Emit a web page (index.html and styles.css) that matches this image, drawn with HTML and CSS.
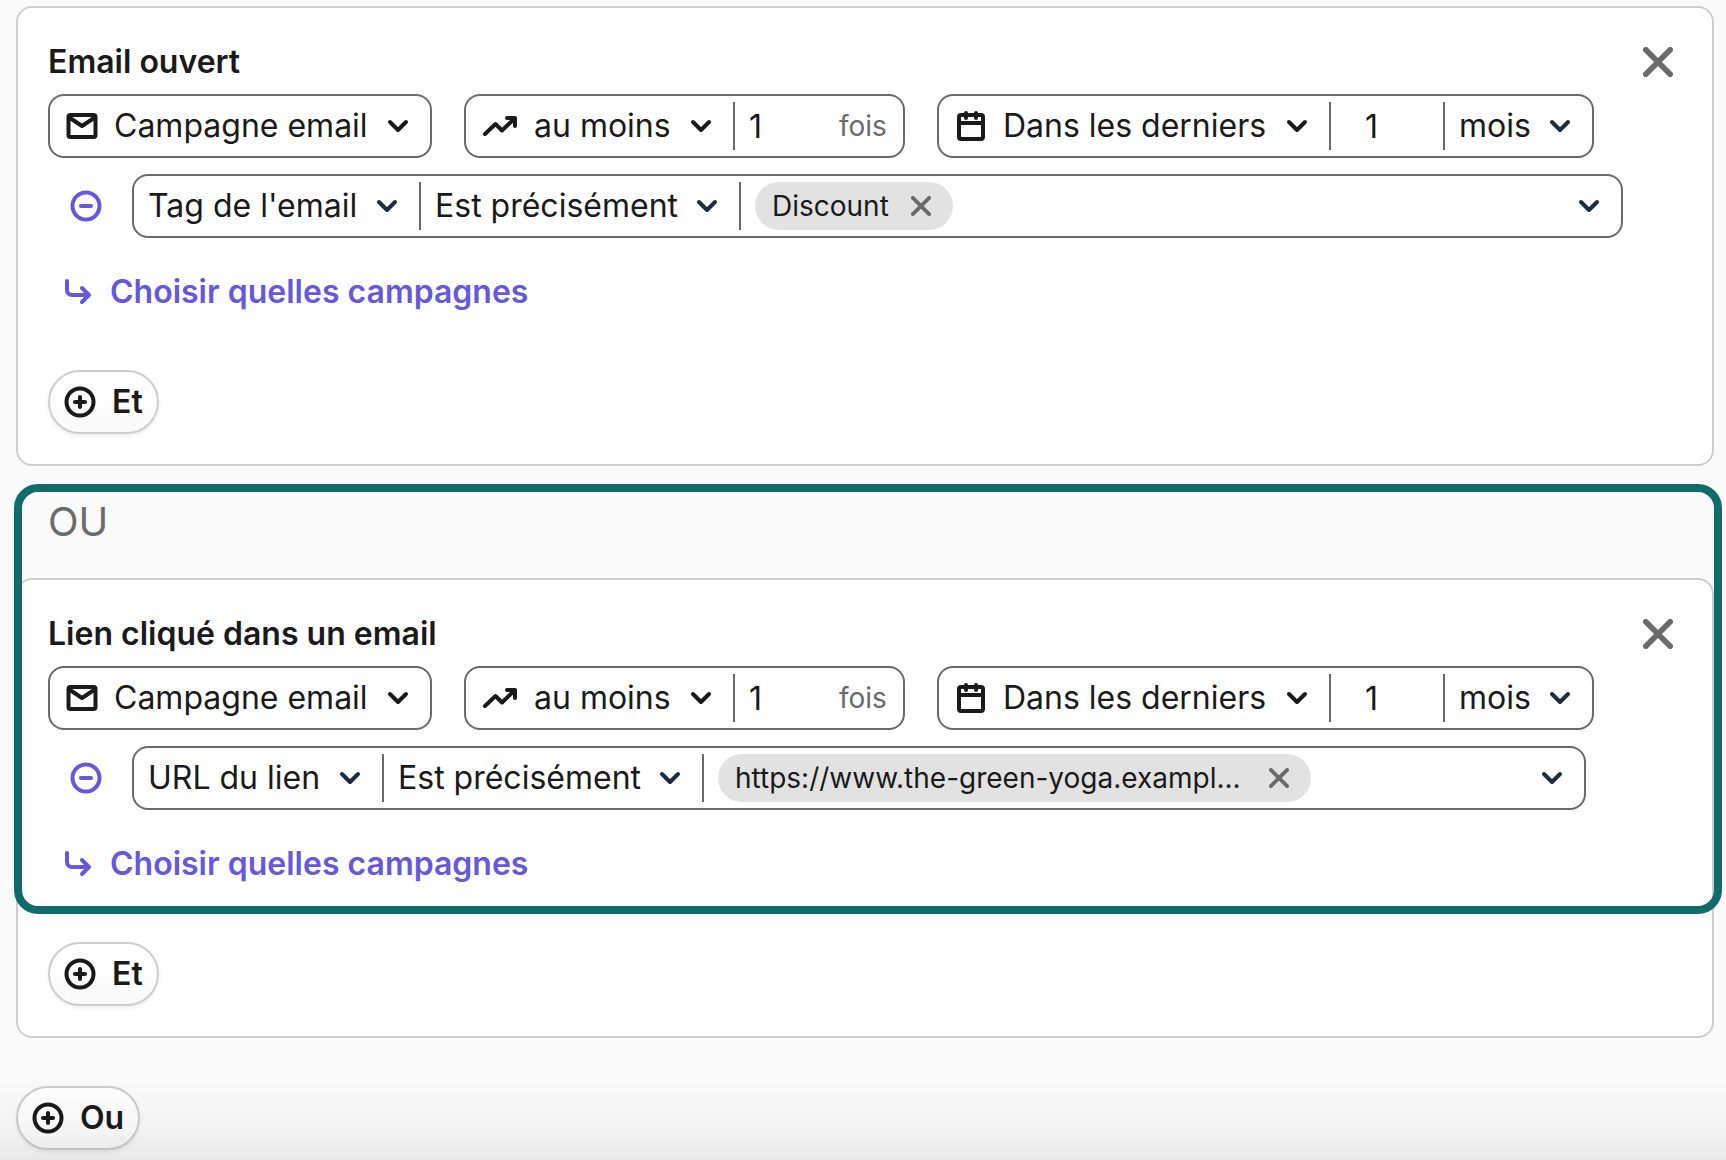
FILE: index.html
```html
<!DOCTYPE html>
<html lang="fr">
<head>
    <meta charset="UTF-8">
    <meta name="viewport" content="width=device-width, initial-scale=1.0">
    <title>Segment</title>
    <link rel="stylesheet" href="styles.css">
</head>
<body>

    <!-- Shared icons -->
    <svg class="sprite" aria-hidden="true">
        <symbol id="i-chevron" viewBox="0 0 24 24"><path d="M4 8l8 8 8-8"/></symbol>
        <symbol id="i-close" viewBox="0 0 32 32"><path d="M3 3l26 26M29 3L3 29"/></symbol>
        <symbol id="i-mail" viewBox="0 0 32 32"><rect x="2.5" y="5" width="27" height="22" rx="2"/><path d="M4 8l12 8 12-8"/></symbol>
        <symbol id="i-trend" viewBox="0 0 36 32"><path d="M3 24L13.5 14l6.5 6.500L32.500 8.500M25 8h8v8"/></symbol>
        <symbol id="i-calendar" viewBox="0 0 32 32"><rect x="4" y="5" width="24" height="24" rx="2"/><path d="M4 13h24M11 3v5M21 3v5"/></symbol>
        <symbol id="i-minus" viewBox="0 0 32 32"><circle cx="16" cy="16" r="13.5"/><path d="M11 16h10"/></symbol>
        <symbol id="i-plus" viewBox="0 0 32 32"><circle cx="16" cy="16" r="13.5"/><path d="M11 16h10M16 11v10"/></symbol>
        <symbol id="i-arrow" viewBox="0 0 28 28"><path d="M3 3v9a5 5 0 0 0 5 5h17M18 10l7 7-7 7"/></symbol>
    </svg>

    <main>
        <section class="card">
            <header class="card-header">
                <h2>Email ouvert</h2>
                <button class="close" aria-label="Supprimer la condition"><svg><use href="#i-close"/></svg></button>
            </header>

            <div class="row">
                <div class="field">
                    <label class="cell with-icon">
                        <svg class="icon"><use href="#i-mail"/></svg>
                        <select aria-label="Source"><option>Campagne email</option></select>
                        <svg class="chevron"><use href="#i-chevron"/></svg>
                    </label>
                </div>
                <div class="field">
                    <label class="cell with-icon">
                        <svg class="icon wide"><use href="#i-trend"/></svg>
                        <select aria-label="Fréquence"><option>au moins</option></select>
                        <svg class="chevron"><use href="#i-chevron"/></svg>
                    </label>
                    <label class="cell count">
                        <input type="number" value="1">
                        <span class="unit">fois</span>
                    </label>
                </div>
                <div class="field">
                    <label class="cell with-icon">
                        <svg class="icon"><use href="#i-calendar"/></svg>
                        <select aria-label="Période"><option>Dans les derniers</option></select>
                        <svg class="chevron"><use href="#i-chevron"/></svg>
                    </label>
                    <label class="cell duration">
                        <input type="number" value="1" aria-label="Durée">
                    </label>
                    <label class="cell plain">
                        <select aria-label="Unité"><option>mois</option></select>
                        <svg class="chevron navy"><use href="#i-chevron"/></svg>
                    </label>
                </div>
            </div>

            <div class="row filter">
                <button class="remove" aria-label="Retirer le filtre"><svg class="icon"><use href="#i-minus"/></svg></button>
                <div class="field">
                    <label class="cell plain">
                        <select aria-label="Filtre"><option>Tag de l'email</option></select>
                        <svg class="chevron navy"><use href="#i-chevron"/></svg>
                    </label>
                    <label class="cell plain">
                        <select aria-label="Opérateur"><option>Est précisément</option></select>
                        <svg class="chevron navy"><use href="#i-chevron"/></svg>
                    </label>
                    <div class="cell values">
                        <span class="chip">
                            <span class="chip-text">Discount</span>
                            <button aria-label="Retirer Discount"><svg><use href="#i-close"/></svg></button>
                        </span>
                        <button class="open" aria-label="Ouvrir la liste"><svg class="chevron navy"><use href="#i-chevron"/></svg></button>
                    </div>
                </div>
            </div>

            <a href="#" class="choose"><svg><use href="#i-arrow"/></svg>Choisir quelles campagnes</a>
            <button class="add"><svg class="icon"><use href="#i-plus"/></svg>Et</button>
        </section>

        <div class="group">
            <p class="operator">OU</p>

            <section class="card">
                <header class="card-header">
                    <h2>Lien cliqué dans un email</h2>
                    <button class="close" aria-label="Supprimer la condition"><svg><use href="#i-close"/></svg></button>
                </header>

                <div class="row">
                    <div class="field">
                        <label class="cell with-icon">
                            <svg class="icon"><use href="#i-mail"/></svg>
                            <select aria-label="Source"><option>Campagne email</option></select>
                            <svg class="chevron"><use href="#i-chevron"/></svg>
                        </label>
                    </div>
                    <div class="field">
                        <label class="cell with-icon">
                            <svg class="icon wide"><use href="#i-trend"/></svg>
                            <select aria-label="Fréquence"><option>au moins</option></select>
                            <svg class="chevron"><use href="#i-chevron"/></svg>
                        </label>
                        <label class="cell count">
                            <input type="number" value="1">
                            <span class="unit">fois</span>
                        </label>
                    </div>
                    <div class="field">
                        <label class="cell with-icon">
                            <svg class="icon"><use href="#i-calendar"/></svg>
                            <select aria-label="Période"><option>Dans les derniers</option></select>
                            <svg class="chevron"><use href="#i-chevron"/></svg>
                        </label>
                        <label class="cell duration">
                            <input type="number" value="1" aria-label="Durée">
                        </label>
                        <label class="cell plain">
                            <select aria-label="Unité"><option>mois</option></select>
                            <svg class="chevron navy"><use href="#i-chevron"/></svg>
                        </label>
                    </div>
                </div>

                <div class="row filter">
                    <button class="remove" aria-label="Retirer le filtre"><svg class="icon"><use href="#i-minus"/></svg></button>
                    <div class="field">
                        <label class="cell plain">
                            <select aria-label="Filtre"><option>URL du lien</option></select>
                            <svg class="chevron navy"><use href="#i-chevron"/></svg>
                        </label>
                        <label class="cell plain">
                            <select aria-label="Opérateur"><option>Est précisément</option></select>
                            <svg class="chevron navy"><use href="#i-chevron"/></svg>
                        </label>
                        <div class="cell values">
                            <span class="chip">
                                <span class="chip-text url">https://www.the-green-yoga.exampl...</span>
                                <button aria-label="Retirer le lien"><svg><use href="#i-close"/></svg></button>
                            </span>
                            <button class="open" aria-label="Ouvrir la liste"><svg class="chevron navy"><use href="#i-chevron"/></svg></button>
                        </div>
                    </div>
                </div>

                <a href="#" class="choose"><svg><use href="#i-arrow"/></svg>Choisir quelles campagnes</a>
                <button class="add"><svg class="icon"><use href="#i-plus"/></svg>Et</button>
            </section>

            <div class="highlight"></div>
        </div>

        <button class="add add-or"><svg class="icon"><use href="#i-plus"/></svg>Ou</button>
    </main>

    <div class="fade"></div>

</body>
</html>
```
FILE: styles.css
```css
* {
    box-sizing: border-box;
}
body {
    margin: 0;
    background-color: #fafafa;
    color: #1a1a1a;
    font-family: Inter, "Liberation Sans", sans-serif;
    font-size: 32px;
    line-height: 40px;
}
main {
    padding: 6px 12px 10px 16px;
}
button, select, input {
    margin: 0;
    padding: 0;
    border: none;
    background: none;
    color: inherit;
    font: inherit;
}
button, select {
    cursor: pointer;
}
svg {
    display: block;
    flex: none;
    fill: none;
    stroke: currentColor;
    stroke-width: 4px;
    stroke-linecap: round;
    stroke-linejoin: round;
}
.sprite {
    position: absolute;
    width: 0;
    height: 0;
}
.icon {
    width: 32px;
    height: 32px;
}
.icon.wide {
    width: 36px;
}
.chevron {
    width: 24px;
    height: 24px;
}
.navy {
    color: #1c2b40;
}

/* Condition card */
.card {
    padding: 30px;
    border: 2px solid #cdcdcd;
    border-radius: 16px;
    background-color: #fff;
}
.card-header {
    display: flex;
    align-items: center;
    justify-content: space-between;
    height: 48px;
    margin-bottom: 8px;
}
h2 {
    margin: 0;
    font-size: 32px;
    font-weight: 600;
}
.close {
    display: flex;
    align-items: center;
    justify-content: center;
    width: 48px;
    height: 48px;
    color: #6a6a6a;
}
.close svg {
    width: 30px;
    height: 30px;
    stroke-width: 6px;
}
.row {
    display: flex;
    align-items: center;
    gap: 32px;
    margin-bottom: 16px;
}
.filter {
    gap: 30px;
    margin-bottom: 30px;
    padding-left: 22px;
}

/* Fields, split in cells */
.field {
    display: flex;
    align-items: center;
    height: 64px;
    border: 2px solid #6a6a6a;
    border-radius: 16px;
}
.cell {
    display: flex;
    align-items: center;
    height: 48px;
    padding: 0 20px 0 14px;
    border-right: 2px solid #6a6a6a;
}
.cell:last-child {
    border-right: none;
}
.with-icon {
    padding-left: 16px;
}
.with-icon .icon {
    margin-right: 16px;
}
select {
    appearance: none;
    height: 48px;
    margin-right: 18px;
    outline: none;
}
.plain select {
    margin-right: 17px;
}
input {
    appearance: textfield;
    width: 78px;
    height: 48px;
    outline: none;
}
input::-webkit-inner-spin-button {
    appearance: none;
    margin: 0;
}
.cell.count {
    padding-right: 16px;
}
.count input {
    width: 90px;
}
.unit {
    color: #6a6a6a;
    font-size: 28px;
}
.cell.duration {
    padding: 0 0 0 34px;
}

/* Filter row */
.remove {
    color: #6558df;
}
.values {
    justify-content: space-between;
    width: 880px;
}
.chip {
    display: flex;
    align-items: center;
    height: 48px;
    padding: 0 22px 0 17px;
    border-radius: 24px;
    background-color: #e2e2e2;
    font-size: 28px;
}
.chip-text {
    margin-right: 22px;
}
.chip-text.url {
    width: 512px;
}
.chip button {
    color: #6a6a6a;
}
.chip svg {
    width: 20px;
    height: 20px;
    stroke-width: 6px;
}
.choose {
    display: flex;
    align-items: center;
    gap: 18px;
    width: fit-content;
    height: 48px;
    margin-bottom: 54px;
    padding-left: 16px;
    color: #6558df;
    font-weight: 600;
    text-decoration: none;
}
.choose svg {
    width: 28px;
    height: 28px;
}
.add {
    display: flex;
    align-items: center;
    gap: 16px;
    height: 64px;
    padding: 0 14px;
    border: 2px solid #cdcdcd;
    border-radius: 32px;
    background: linear-gradient(#fff, #fafafa);
    box-shadow: 0 2px 4px rgba(0, 0, 0, 0.08);
    font-weight: 600;
}
.add-or {
    margin-top: 48px;
}

/* Highlighted group */
.group {
    position: relative;
}
.operator {
    height: 112px;
    margin: 0;
    padding: 32px 32px 0;
    color: #6a6a6a;
    font-size: 40px;
    line-height: 48px;
}
.highlight {
    position: absolute;
    top: 18px;
    right: -8px;
    bottom: 124px;
    left: -2px;
    border: 8px solid #116b6a;
    border-radius: 24px;
    pointer-events: none;
}
.fade {
    position: fixed;
    right: 0;
    bottom: 0;
    left: 0;
    height: 88px;
    background: linear-gradient(rgba(0, 0, 0, 0), rgba(0, 0, 0, 0.025) 60%, rgba(0, 0, 0, 0.07));
    pointer-events: none;
}
```
